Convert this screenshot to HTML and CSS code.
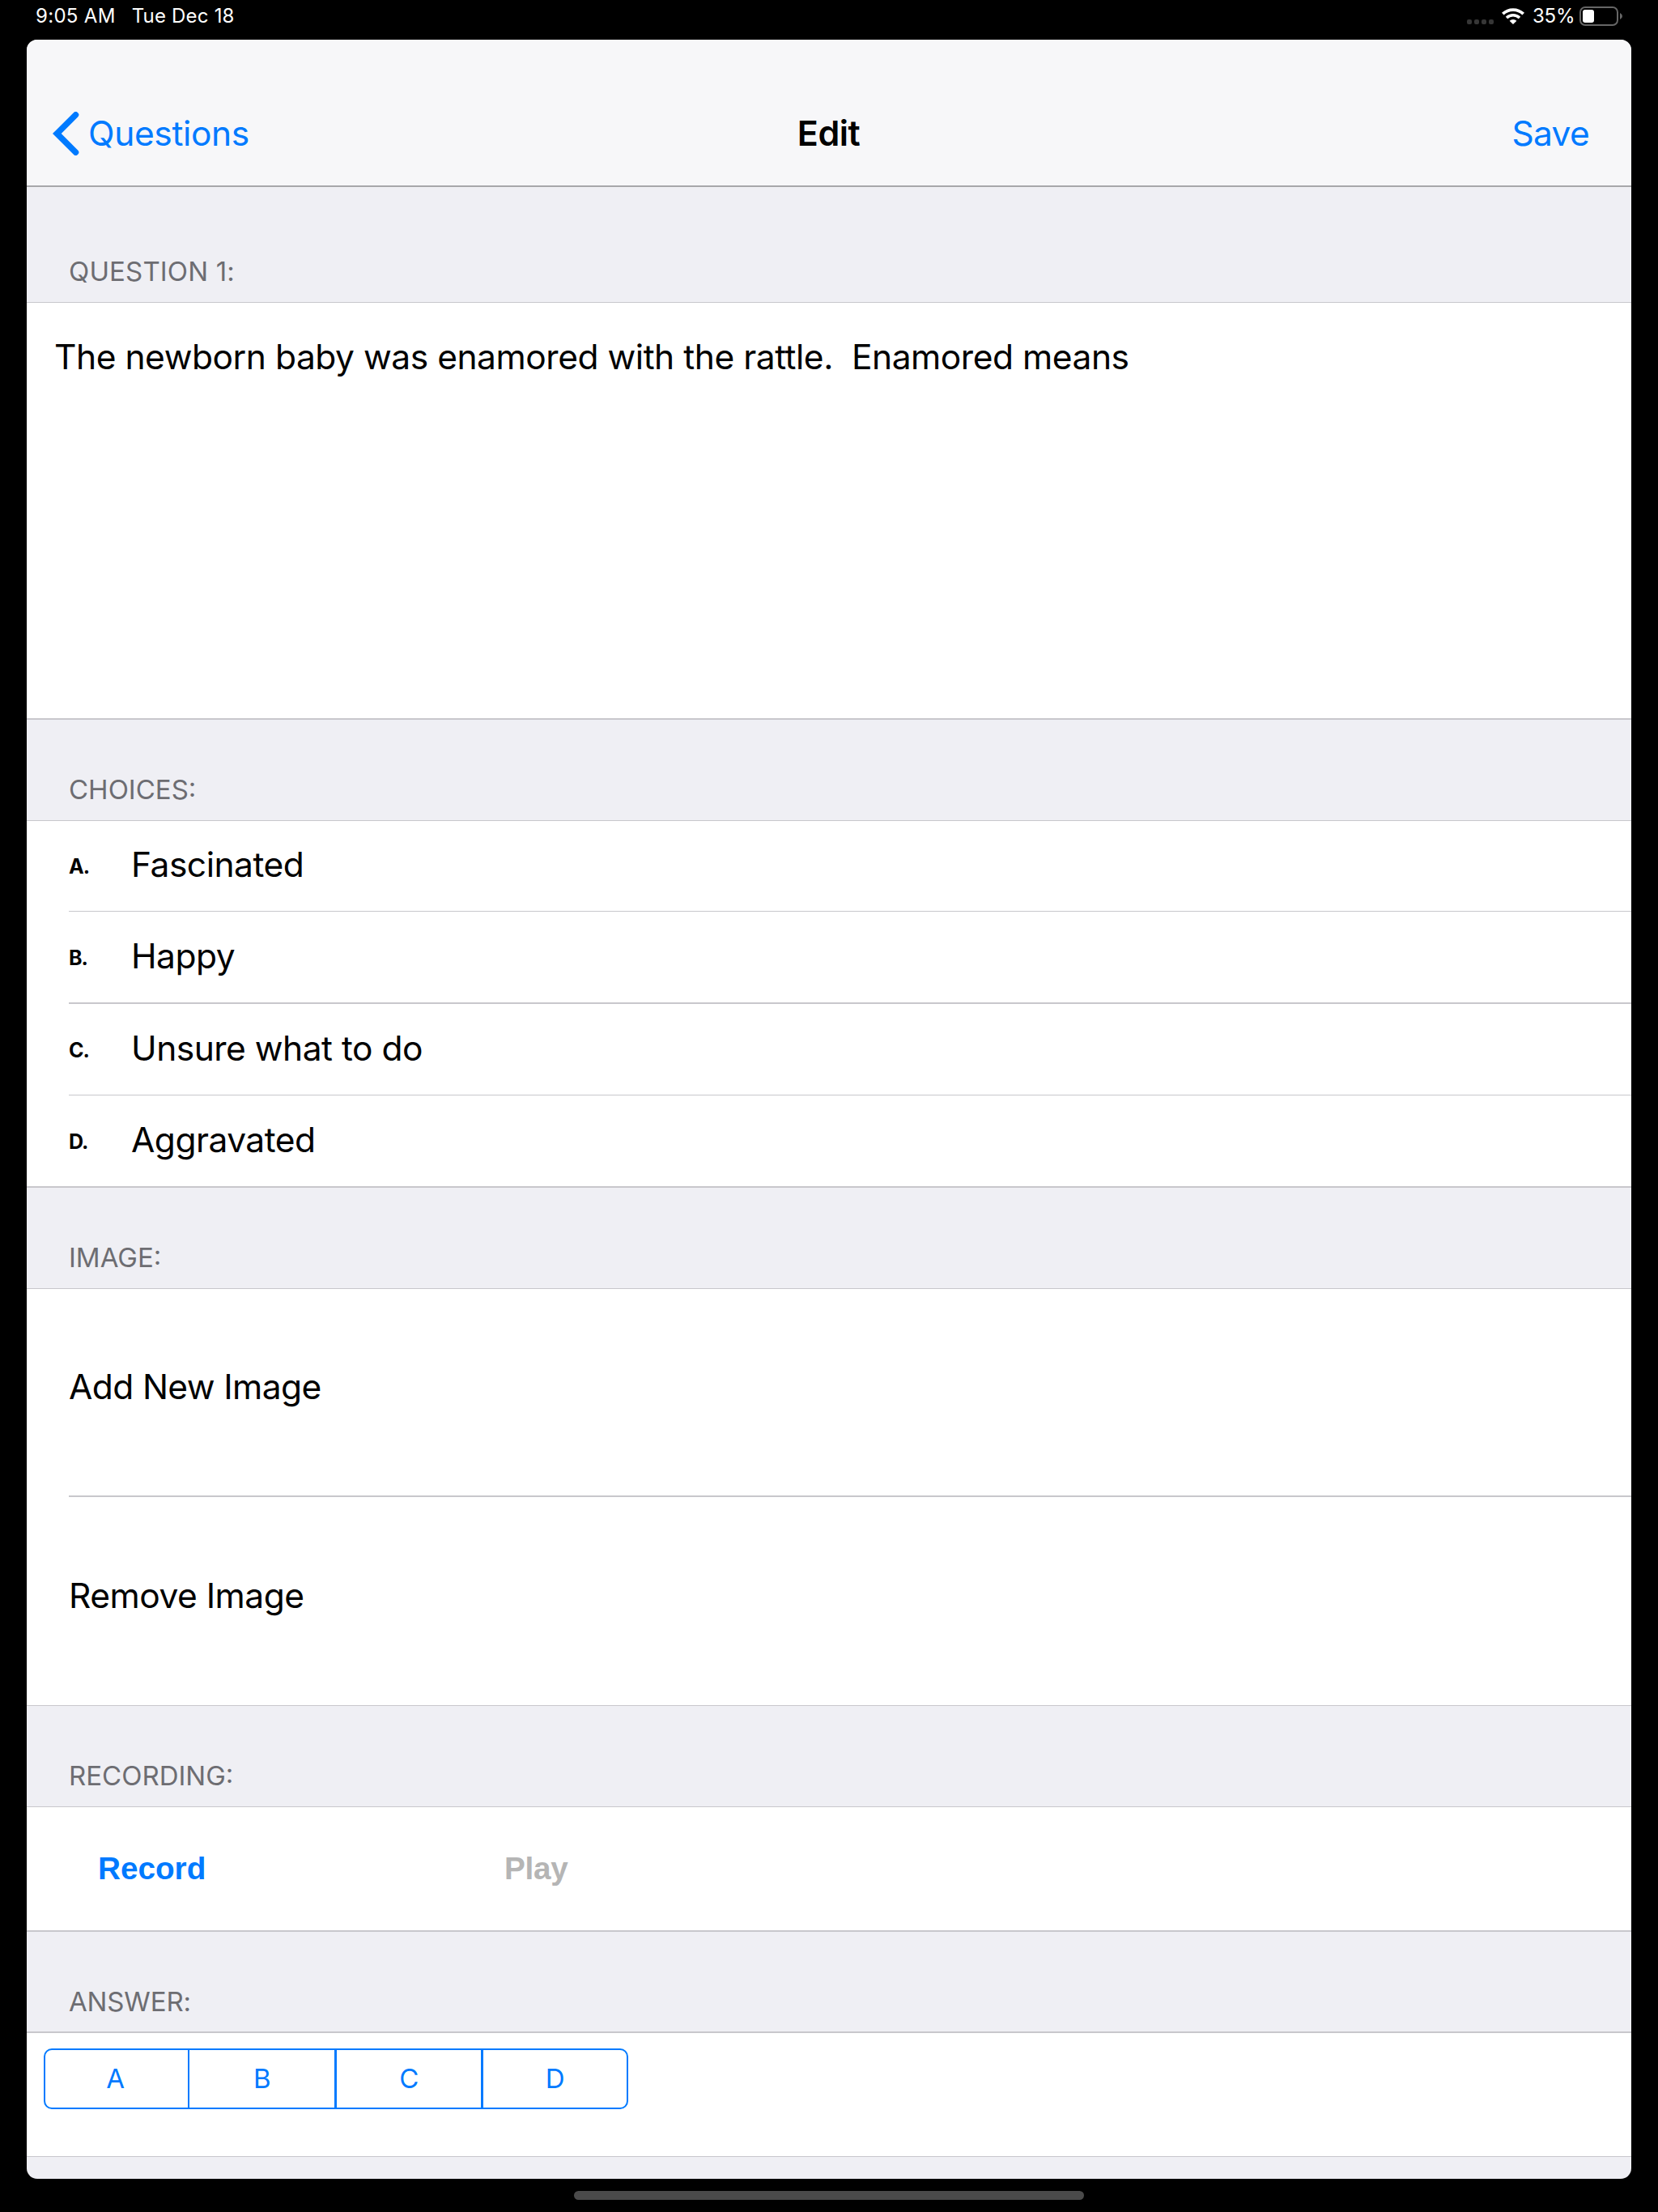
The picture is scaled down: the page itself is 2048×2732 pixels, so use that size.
FILE: index.html
```html
<!DOCTYPE html>
<html lang="en">

<head>
    <meta charset="UTF-8">
    <meta name="viewport" content="width=device-width, initial-scale=1.0">
    <title>Edit Question</title>
    <link rel="stylesheet" href="styles.css">
</head>

<body>
    <header class="status-bar">
        <span class="time">9:05 AM</span>
        <span class="date">Tue Dec 18</span>
        <div class="signal">
            <i></i><i></i><i></i><i></i>
        </div>
        <svg class="wifi" viewBox="0 0 28 20" width="28" height="20">
            <path d="M1.3 7.2 A18.2 18.2 0 0 1 26.7 7.2" fill="none" stroke="#fff" stroke-width="3.7" />
            <path d="M6 12 A11.5 11.5 0 0 1 22 12" fill="none" stroke="#fff" stroke-width="3.5" />
            <path d="M9.6 15.7 A6.3 6.3 0 0 1 18.4 15.7 L14 20 Z" fill="#fff" />
        </svg>
        <span class="percent">35%</span>
        <svg class="battery" viewBox="0 0 54 24" width="54" height="24">
            <rect x="1" y="1" width="46" height="22" rx="6" fill="none" stroke="#666" stroke-width="2" />
            <rect x="4" y="4" width="14" height="16" rx="3" fill="#fff" />
            <path d="M50 8 Q53 9.5 53 12 Q53 14.5 50 16 Z" fill="#666" />
        </svg>
    </header>

    <main class="sheet">
        <nav class="nav-bar">
            <a class="back">
                <svg viewBox="0 0 33 54" width="33" height="54">
                    <path d="M28.5 3.8 L5.3 27 L28.5 50.2" fill="none" stroke="#007aff" stroke-width="7.5" stroke-linecap="round" />
                </svg>
                <span>Questions</span>
            </a>
            <h1>Edit</h1>
            <a class="save">Save</a>
        </nav>

        <h2 class="section-title first">QUESTION 1:</h2>
        <section class="group thick-bottom">
            <p class="question">The newborn baby was enamored with the rattle.  Enamored means</p>
        </section>

        <h2 class="section-title">CHOICES:</h2>
        <section class="group thick-bottom">
            <div class="choice short"><b>A.</b><span>Fascinated</span></div>
            <hr>
            <div class="choice"><b>B.</b><span>Happy</span></div>
            <hr class="thick">
            <div class="choice"><b>C.</b><span>Unsure what to do</span></div>
            <hr>
            <div class="choice"><b>D.</b><span>Aggravated</span></div>
        </section>

        <h2 class="section-title">IMAGE:</h2>
        <section class="group">
            <div class="image-action">Add New Image</div>
            <hr class="thick">
            <div class="image-action remove">Remove Image</div>
        </section>

        <h2 class="section-title">RECORDING:</h2>
        <section class="group thick-bottom">
            <div class="recording">
                <button class="record">Record</button>
                <button class="play" disabled>Play</button>
            </div>
        </section>

        <h2 class="section-title answer-title">ANSWER:</h2>
        <section class="group thick-top">
            <div class="answer">
                <div class="segments">
                    <span>A</span>
                    <span>B</span>
                    <span>C</span>
                    <span>D</span>
                </div>
            </div>
        </section>
    </main>

    <div class="home-bar"></div>
</body>

</html>
```

FILE: styles.css
```css
* {
    box-sizing: border-box;
}

body {
    margin: 0;
    width: 2048px;
    height: 2732px;
    background-color: #000;
    font-family: "Inter", sans-serif;
    font-size: 42.5px;
    letter-spacing: -0.5px;
    color: #000;
    overflow: hidden;
}

h1,
h2,
p {
    margin: 0;
    font-weight: 400;
}

/* status bar */
.status-bar {
    display: flex;
    height: 49px;
    padding: 0 43px 0 44px;
    color: #fff;
    font-size: 24px;
    line-height: 40px;
    letter-spacing: 0.3px;
}

.date {
    margin-left: 20px;
    letter-spacing: 0.2px;
}

.signal {
    display: flex;
    gap: 3px;
    margin: 24px 10px 0 auto;
}

.signal i {
    width: 6px;
    height: 6px;
    border-radius: 2px;
    background-color: #363636;
}

.wifi {
    margin-top: 10px;
}

.percent {
    margin-left: 10px;
    width: 58px;
    letter-spacing: -0.2px;
}

.battery {
    margin-top: 8px;
}

/* sheet */
.sheet {
    width: 1982px;
    height: 2642px;
    margin: 0 auto;
    border-radius: 13px;
    background-color: #efeff4;
    overflow: hidden;
}

.nav-bar {
    display: grid;
    grid-template-columns: 1fr auto 1fr;
    align-items: center;
    height: 182px;
    padding: 52px 52px 0 32px;
    background-color: #f7f7f9;
    border-bottom: 2px solid #a7a7aa;
}

.back {
    display: flex;
    align-items: center;
    gap: 11px;
    color: #007aff;
    letter-spacing: -0.35px;
}

.back span,
.nav-bar h1,
.save {
    padding-bottom: 2px;
}

.nav-bar h1 {
    font-size: 43px;
    font-weight: 600;
    padding-left: 19px;
}

.save {
    text-align: right;
    color: #007aff;
    letter-spacing: -0.7px;
}

.section-title {
    height: 124px;
    padding: 66px 0 0 52px;
    font-size: 33px;
    line-height: 40px;
    letter-spacing: 0;
    color: #6d6d72;
}

.section-title.first {
    height: 142px;
    padding-top: 84px;
    letter-spacing: 0.15px;
}

.answer-title {
    height: 123px;
    letter-spacing: -0.15px;
}

.group {
    background-color: #fff;
    border-top: 1px solid #c8c7cc;
    border-bottom: 1px solid #c8c7cc;
}

.thick-top {
    border-top-width: 2px;
}

.thick-bottom {
    border-bottom-width: 2px;
}

hr {
    height: 1px;
    margin: 0 0 0 52px;
    border: 0;
    background-color: #c8c7cc;
}

hr.thick {
    height: 2px;
}

.question {
    height: 513px;
    padding: 41px 34px;
    line-height: 52px;
    letter-spacing: -0.46px;
    white-space: pre-wrap;
}

.choice {
    display: flex;
    align-items: center;
    height: 112px;
    padding: 0 0 4px 52px;
}

.choice.short {
    height: 111px;
    padding-bottom: 5px;
}

.choice b {
    width: 77px;
    padding-top: 6px;
    font-size: 25px;
    letter-spacing: -1px;
}

.image-action {
    display: flex;
    align-items: center;
    height: 255px;
    padding: 0 0 15px 52px;
    letter-spacing: -0.6px;
}

.image-action.remove {
    height: 257px;
    letter-spacing: -0.5px;
}

.recording {
    display: flex;
    align-items: center;
    height: 152px;
    padding-left: 88px;
}

.recording button {
    padding: 0;
    border: 0;
    background: none;
    font-family: "Liberation Sans", sans-serif;
    font-size: 38.7px;
    font-weight: bold;
    text-align: left;
}

.record {
    width: 502px;
    color: #007aff;
}

.play {
    color: #b5b5b5;
    letter-spacing: -0.3px;
}

.answer {
    height: 152px;
    padding: 19px 0 0 21px;
}

.segments {
    display: grid;
    grid-template-columns: 176px 181px 181px 1fr;
    width: 722px;
    height: 75px;
    border: 2.5px solid #007aff;
    border-radius: 10px;
    font-size: 33px;
    line-height: 71px;
    text-align: center;
    color: #007aff;
}

.segments span + span {
    border-left: 2px solid #007aff;
}

.segments span:first-child {
    padding-right: 3px;
}

.segments span:nth-child(n + 3) {
    border-left-width: 3px;
}

/* home indicator */
.home-bar {
    width: 630px;
    height: 11px;
    margin: 15px auto 0;
    border-radius: 6px;
    background-color: #4a4a4a;
}
```
